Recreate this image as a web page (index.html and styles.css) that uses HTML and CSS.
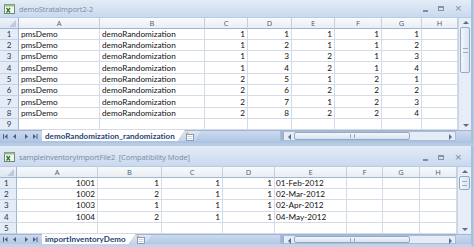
FILE: index.html
```html
<!DOCTYPE html>
<html>
<head>
<meta charset="utf-8">
<link rel="stylesheet" href="styles.css">
</head>
<body>
<div class="app">
  <section class="win win1">
    <div class="titlebar">
      <svg class="xlicon" width="11" height="10" viewBox="0 0 11 10"><rect x="0.5" y="0.5" width="10" height="9" fill="#f4f7f2" stroke="#6f8a6a"/><rect x="0.5" y="0.5" width="10" height="2" fill="#9fb89a"/><path d="M2.5 4 L6 8.5 M6 4 L2.5 8.5" stroke="#2f7d32" stroke-width="1.4"/></svg>
      <span class="title">demoStrataImport2-2</span>
      <div class="ctrls"><span class="min"></span><span class="max"></span><span class="cls">×</span></div>
    </div>
    <div class="body">
      <div class="grid g1">
        <div class="corner"><i></i></div><div class="ch">A</div><div class="ch">B</div><div class="ch">C</div><div class="ch">D</div><div class="ch">E</div><div class="ch">F</div><div class="ch">G</div><div class="ch">H</div>
        <div class="rh">1</div><div class="c">pmsDemo</div><div class="c">demoRandomization</div><div class="c n">1</div><div class="c n">1</div><div class="c n">1</div><div class="c n">1</div><div class="c n">1</div><div class="c"></div>
        <div class="rh">2</div><div class="c">pmsDemo</div><div class="c">demoRandomization</div><div class="c n">1</div><div class="c n">2</div><div class="c n">1</div><div class="c n">1</div><div class="c n">2</div><div class="c"></div>
        <div class="rh">3</div><div class="c">pmsDemo</div><div class="c">demoRandomization</div><div class="c n">1</div><div class="c n">3</div><div class="c n">2</div><div class="c n">1</div><div class="c n">3</div><div class="c"></div>
        <div class="rh">4</div><div class="c">pmsDemo</div><div class="c">demoRandomization</div><div class="c n">1</div><div class="c n">4</div><div class="c n">2</div><div class="c n">1</div><div class="c n">4</div><div class="c"></div>
        <div class="rh">5</div><div class="c">pmsDemo</div><div class="c">demoRandomization</div><div class="c n">2</div><div class="c n">5</div><div class="c n">1</div><div class="c n">2</div><div class="c n">1</div><div class="c"></div>
        <div class="rh">6</div><div class="c">pmsDemo</div><div class="c">demoRandomization</div><div class="c n">2</div><div class="c n">6</div><div class="c n">2</div><div class="c n">2</div><div class="c n">2</div><div class="c"></div>
        <div class="rh">7</div><div class="c">pmsDemo</div><div class="c">demoRandomization</div><div class="c n">2</div><div class="c n">7</div><div class="c n">1</div><div class="c n">2</div><div class="c n">3</div><div class="c"></div>
        <div class="rh">8</div><div class="c">pmsDemo</div><div class="c">demoRandomization</div><div class="c n">2</div><div class="c n">8</div><div class="c n">2</div><div class="c n">2</div><div class="c n">4</div><div class="c"></div>
        <div class="rh">9</div><div class="c"></div><div class="c"></div><div class="c"></div><div class="c"></div><div class="c"></div><div class="c"></div><div class="c"></div><div class="c"></div>
      </div>
      <div class="vscroll">
        <div class="vbtn up"></div>
        <div class="vthumb t1"><b></b></div>
        <div class="vtrack"></div>
        <div class="vbtn down"></div>
      </div>
    </div>
    <div class="tabbar">
      <div class="nav">
        <svg width="38" height="9" viewBox="0 0 38 9"><g fill="#4a5f80"><rect x="3" y="2" width="1" height="5"/><path d="M4.5 4.5 L7.5 2 V7 Z"/><path d="M13 4.5 L16 2 V7 Z"/><path d="M25 2 L28 4.5 L25 7 Z"/><path d="M33 2 L36 4.5 L33 7 Z"/><rect x="36.5" y="2" width="1" height="5"/></g></svg>
      </div>
      <div class="tab">demoRandomization_randomization</div>
      <div class="newtab"><svg width="12" height="9" viewBox="0 0 12 9"><rect x="2.5" y="2.5" width="7" height="6" fill="#fff" stroke="#8a9bb5"/><path d="M3.5 4.5 H8.5 M3.5 6.5 H8.5" stroke="#c9d3e2" stroke-width="1"/><path d="M2 0.5 L4 2.5 M4 0.5 L2 2.5" stroke="#d9a020" stroke-width="1"/></svg></div>
      <div class="spacer"></div>
      <div class="hscroll">
        <div class="split"></div>
        <div class="hbtn left"></div>
        <div class="hthumb h1"><b></b></div>
        <div class="htrack"></div>
        <div class="hbtn right"></div>
      </div>
      <div class="grip"></div>
    </div>
  </section>

  <section class="win win2">
    <div class="titlebar">
      <svg class="xlicon" width="11" height="10" viewBox="0 0 11 10"><rect x="0.5" y="0.5" width="10" height="9" fill="#f4f7f2" stroke="#6f8a6a"/><rect x="0.5" y="0.5" width="10" height="2" fill="#9fb89a"/><path d="M2.5 4 L6 8.5 M6 4 L2.5 8.5" stroke="#2f7d32" stroke-width="1.4"/></svg>
      <span class="title">sampleInventoryImportFile2&nbsp; [Compatibility Mode]</span>
      <div class="ctrls"><span class="min"></span><span class="max"></span><span class="cls">×</span></div>
    </div>
    <div class="body">
      <div class="grid g2">
        <div class="corner"><i></i></div><div class="ch">A</div><div class="ch">B</div><div class="ch">C</div><div class="ch">D</div><div class="ch">E</div><div class="ch">F</div><div class="ch">G</div><div class="ch">H</div>
        <div class="rh l">1</div><div class="c n">1001</div><div class="c n">1</div><div class="c n">1</div><div class="c n">1</div><div class="c d">01-Feb-2012</div><div class="c"></div><div class="c"></div><div class="c"></div>
        <div class="rh l">2</div><div class="c n">1002</div><div class="c n">2</div><div class="c n">1</div><div class="c n">1</div><div class="c d">02-Mar-2012</div><div class="c"></div><div class="c"></div><div class="c"></div>
        <div class="rh l">3</div><div class="c n">1003</div><div class="c n">1</div><div class="c n">1</div><div class="c n">1</div><div class="c d">02-Apr-2012</div><div class="c"></div><div class="c"></div><div class="c"></div>
        <div class="rh l">4</div><div class="c n">1004</div><div class="c n">2</div><div class="c n">1</div><div class="c n">1</div><div class="c d">04-May-2012</div><div class="c"></div><div class="c"></div><div class="c"></div>
        <div class="rh l">5</div><div class="c"></div><div class="c"></div><div class="c"></div><div class="c"></div><div class="c"></div><div class="c"></div><div class="c"></div><div class="c"></div>
      </div>
      <div class="vscroll">
        <div class="vbtn up"></div>
        <div class="vthumb t2"><b></b></div>
        <div class="vtrack"></div>
        <div class="vbtn down"></div>
      </div>
    </div>
    <div class="tabbar">
      <div class="nav">
        <svg width="38" height="9" viewBox="0 0 38 9"><g fill="#4a5f80"><rect x="3" y="2" width="1" height="5"/><path d="M4.5 4.5 L7.5 2 V7 Z"/><path d="M13 4.5 L16 2 V7 Z"/><path d="M25 2 L28 4.5 L25 7 Z"/><path d="M33 2 L36 4.5 L33 7 Z"/><rect x="36.5" y="2" width="1" height="5"/></g></svg>
      </div>
      <div class="tab">importInventoryDemo</div>
      <div class="newtab"><svg width="12" height="9" viewBox="0 0 12 9"><rect x="2.5" y="2.5" width="7" height="6" fill="#fff" stroke="#8a9bb5"/><path d="M3.5 4.5 H8.5 M3.5 6.5 H8.5" stroke="#c9d3e2" stroke-width="1"/><path d="M2 0.5 L4 2.5 M4 0.5 L2 2.5" stroke="#d9a020" stroke-width="1"/></svg></div>
      <div class="spacer"></div>
      <div class="hscroll">
        <div class="split"></div>
        <div class="hbtn left"></div>
        <div class="hthumb h2"><b></b></div>
        <div class="htrack"></div>
        <div class="hbtn right"></div>
      </div>
      <div class="grip"></div>
    </div>
  </section>
</div>
</body>
</html>
```
FILE: styles.css
```css
* { box-sizing: border-box; margin: 0; padding: 0; }

body {
  width: 474px;
  height: 247px;
  overflow: hidden;
  background: #b7cbe4;
  font-family: Lato, "Open Sans", sans-serif;
}

.app {
  display: flex;
  flex-direction: column;
  gap: 3px;
}

.win {
  display: flex;
  flex-direction: column;
  width: 473px;
  background: #cddcef;
  border-right: 2px solid #a9bedb;
}

.win1 { height: 143px; border-bottom: 2px solid #aec3df; }
.win2 { height: 101px; border-bottom: 3px solid #c3d4ea; }

/* title bar */
.titlebar {
  display: flex;
  align-items: center;
  gap: 4px;
  padding-left: 4px;
  background: linear-gradient(#e3ecf7, #d3e1f2 60%, #c9d9ee);
  color: #7a8aa3;
  font-family: "Open Sans", sans-serif;
  font-size: 7.5px;
  border-bottom: 1px solid #b9cbe3;
}
.win1 .titlebar { height: 18px; }
.win2 .titlebar { height: 21px; padding-top: 2px; }

.title { flex: 1; letter-spacing: -0.1px; }

.ctrls {
  display: flex;
  align-items: center;
  gap: 10px;
  padding-right: 9px;
  color: #7c8aa0;
}
.ctrls span { display: block; }
.min { width: 5px; height: 2px; background: #7f8ea6; margin-top: 5px; }
.max { width: 6px; height: 5px; border: 1px solid #8593aa; border-top-width: 2px; }
.cls { font-size: 9px; line-height: 9px; font-family: "DejaVu Sans", sans-serif; }

/* sheet body */
.body {
  display: flex;
  flex: 1;
  min-height: 0;
  background: #fff;
}

.grid {
  display: grid;
  font-size: 8.2px;
  color: #111;
}
.g1 {
  grid-template-columns: 19px 81px 105px 43px 44px 43px 47px 40px 36px;
  grid-template-rows: 10.5px repeat(9, 11.33px);
}
.g2 {
  grid-template-columns: 17px 81px 64px 61px 52px 72px 36px 37px 37px;
  grid-template-rows: 11px repeat(5, 11.2px);
}

.corner {
  background: linear-gradient(#eef2f8, #dde6f2);
  border-right: 1px solid #9eb6ce;
  border-bottom: 1px solid #9eb6ce;
  position: relative;
}
.corner i {
  position: absolute;
  right: 2px;
  bottom: 1px;
  width: 0;
  height: 0;
  border-left: 7px solid transparent;
  border-bottom: 7px solid #bccadf;
}

.ch {
  display: flex;
  align-items: center;
  justify-content: center;
  background: linear-gradient(#f8fafc, #e9eef5);
  border-right: 1px solid #c5d0de;
  border-bottom: 1px solid #9eb6ce;
  color: #4f5b6c;
  font-size: 7.5px;
  font-family: "Open Sans", sans-serif;
}

.rh {
  display: flex;
  align-items: center;
  justify-content: center;
  background: #e4ecf7;
  border-right: 1px solid #9eb6ce;
  border-bottom: 1px solid #c5d2e4;
  color: #2d3846;
  font-size: 8px;
}
.rh.l { justify-content: flex-start; padding-left: 4px; }

.c {
  display: flex;
  align-items: center;
  padding: 0 2px;
  border-right: 1px solid #d4dbe6;
  border-bottom: 1px solid #d4dbe6;
  white-space: nowrap;
  overflow: hidden;
}
.c.n { justify-content: flex-end; }
.c.d { padding-left: 1px; }

/* vertical scrollbar */
.vscroll {
  width: 14px;
  display: flex;
  flex-direction: column;
  background: #e8eef7;
  border-left: 1px solid #c8d4e4;
}
.vbtn {
  height: 9px;
  position: relative;
}
.vbtn::after {
  content: "";
  position: absolute;
  left: 4px;
  border-left: 3px solid transparent;
  border-right: 3px solid transparent;
}
.vbtn.up::after { top: 3px; border-bottom: 3px solid #5b6f8e; }
.vbtn.down::after { top: 3px; border-top: 3px solid #5b6f8e; }
.vthumb {
  margin: 0 1px;
  border: 1px solid #93a9c8;
  border-radius: 2px;
  background: linear-gradient(90deg, #f3f6fb, #dbe5f2);
  display: flex;
  align-items: center;
  justify-content: center;
}
.vthumb b { width: 5px; height: 5px; border-top: 1px solid #9aabc3; border-bottom: 1px solid #9aabc3; }
.t1 { height: 46px; }
.t2 { height: 14px; }
.vtrack { flex: 1; }

/* tab bar */
.tabbar {
  display: flex;
  align-items: stretch;
  height: 11px;
  background: linear-gradient(#cad9ee, #b3c8e5);
  border-top: 1px solid #9fb5d3;
}
.win2 .tabbar { height: 10px; }

.nav {
  width: 42px;
  display: flex;
  align-items: center;
}
.nav svg { display: block; }

.tab {
  display: flex;
  align-items: center;
  padding: 0 10px 0 3px;
  background: #fff;
  color: #1f3f78;
  font-weight: 700;
  font-size: 8px;
  letter-spacing: 0.05px;
  clip-path: polygon(0 0, 100% 0, calc(100% - 7px) 100%, 0 100%);
  margin-top: -1px;
}

.newtab {
  width: 22px;
  margin-left: -6px;
  display: flex;
  align-items: center;
  justify-content: center;
  background: linear-gradient(#dfe8f4, #c2d3ea);
  clip-path: polygon(0 100%, 6px 0, 100% 0, calc(100% - 6px) 100%);
}

.spacer { flex: 1; }

.hscroll {
  width: 176px;
  display: flex;
  align-items: stretch;
  background: #e5ecf6;
  border: 1px solid #a8bcd8;
}
.split { width: 4px; background: #9fb3cf; border-right: 1px solid #e8eef7; }
.hbtn { width: 9px; position: relative; }
.hbtn::after {
  content: "";
  position: absolute;
  top: 2px;
  border-top: 3px solid transparent;
  border-bottom: 3px solid transparent;
}
.hbtn.left::after { left: 3px; border-right: 3px solid #5b6f8e; }
.hbtn.right::after { left: 3px; border-left: 3px solid #5b6f8e; }
.hthumb {
  border: 1px solid #93a9c8;
  border-radius: 2px;
  background: linear-gradient(#f3f6fb, #d7e2f0);
  display: flex;
  align-items: center;
  justify-content: center;
}
.hthumb b { width: 5px; height: 4px; border-left: 1px solid #9aabc3; border-right: 1px solid #9aabc3; }
.h1 { width: 116px; }
.h2 { width: 116px; }
.htrack { flex: 1; }

.grip { width: 15px; }
```
